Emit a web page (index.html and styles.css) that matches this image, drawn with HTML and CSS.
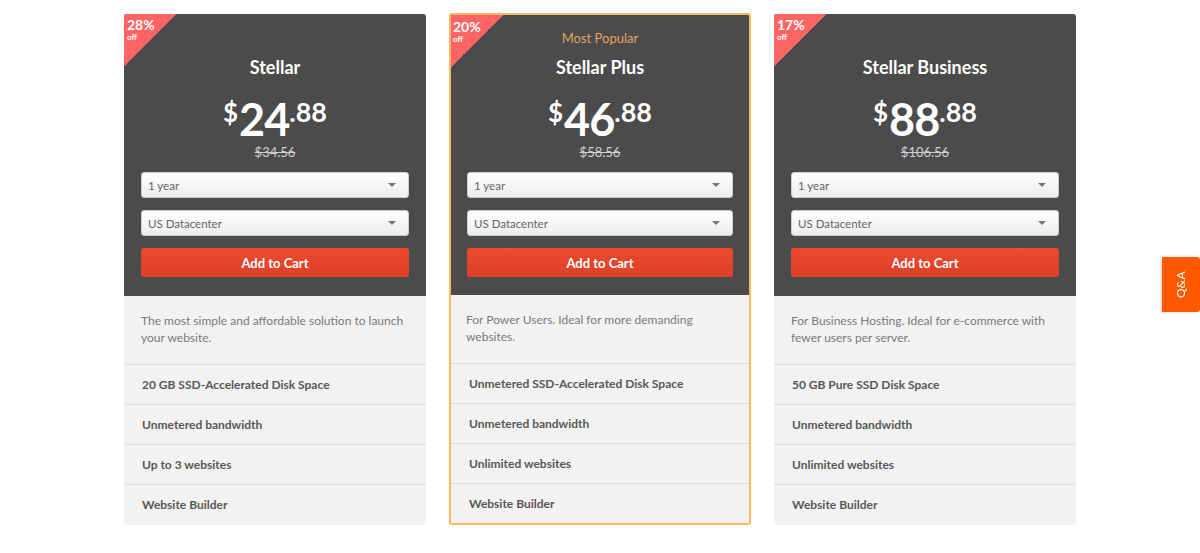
FILE: index.html
```html
<!DOCTYPE html>
<html lang="en">
<head>
    <meta charset="UTF-8">
    <title>Stellar Hosting Plans</title>
    <link rel="stylesheet" href="styles.css">
</head>
<body>
    <div class="plans">
        <div class="plan">
            <div class="plan-head">
                <div class="badge"><span class="badge-pct">28%</span><span class="badge-off">off</span></div>
                <div class="popular"></div>
                <div class="plan-name">Stellar</div>
                <div class="price"><span class="cur">$</span><span class="whole">24</span><span class="cents">.88</span></div>
                <div class="old-price">$34.56</div>
                <div class="select">1 year<span class="arrow"></span></div>
                <div class="select">US Datacenter<span class="arrow"></span></div>
                <button class="cart-btn">Add to Cart</button>
            </div>
            <div class="plan-body">
                <p class="desc">The most simple and affordable solution to launch your website.</p>
                <div class="feature">20 GB SSD-Accelerated Disk Space</div>
                <div class="feature">Unmetered bandwidth</div>
                <div class="feature">Up to 3 websites</div>
                <div class="feature">Website Builder</div>
            </div>
        </div>

        <div class="plan featured">
            <div class="plan-head">
                <div class="badge"><span class="badge-pct">20%</span><span class="badge-off">off</span></div>
                <div class="popular">Most Popular</div>
                <div class="plan-name">Stellar Plus</div>
                <div class="price"><span class="cur">$</span><span class="whole">46</span><span class="cents">.88</span></div>
                <div class="old-price">$58.56</div>
                <div class="select">1 year<span class="arrow"></span></div>
                <div class="select">US Datacenter<span class="arrow"></span></div>
                <button class="cart-btn">Add to Cart</button>
            </div>
            <div class="plan-body">
                <p class="desc">For Power Users. Ideal for more demanding websites.</p>
                <div class="feature">Unmetered SSD-Accelerated Disk Space</div>
                <div class="feature">Unmetered bandwidth</div>
                <div class="feature">Unlimited websites</div>
                <div class="feature">Website Builder</div>
            </div>
        </div>

        <div class="plan">
            <div class="plan-head">
                <div class="badge"><span class="badge-pct">17%</span><span class="badge-off">off</span></div>
                <div class="popular"></div>
                <div class="plan-name">Stellar Business</div>
                <div class="price"><span class="cur">$</span><span class="whole">88</span><span class="cents">.88</span></div>
                <div class="old-price">$106.56</div>
                <div class="select">1 year<span class="arrow"></span></div>
                <div class="select">US Datacenter<span class="arrow"></span></div>
                <button class="cart-btn">Add to Cart</button>
            </div>
            <div class="plan-body">
                <p class="desc">For Business Hosting. Ideal for e-commerce with fewer users per server.</p>
                <div class="feature">50 GB Pure SSD Disk Space</div>
                <div class="feature">Unmetered bandwidth</div>
                <div class="feature">Unlimited websites</div>
                <div class="feature">Website Builder</div>
            </div>
        </div>
    </div>

    <div class="qa-tab">Q&amp;A</div>
</body>
</html>
```

FILE: styles.css
```css
body {
    font-family: Lato, "Open Sans", sans-serif;
    margin: 0;
    background-color: #fff;
}
.plans {
    display: flex;
    justify-content: center;
    gap: 23px;
    padding-top: 14px;
}
.plan {
    width: 302px;
    box-sizing: border-box;
    border-radius: 3px;
    overflow: hidden;
    background-color: #f2f2f2;
}
.plan.featured {
    border: 2px solid #f4b866;
    margin-top: -1px;
    height: 512px;
}
.plan-head {
    position: relative;
    background-color: #4b4b4c;
    padding: 16px 17px 19px;
    text-align: center;
    color: #fff;
}
.featured .plan-head {
    padding: 15px 16px 18px;
}
.badge {
    position: absolute;
    top: 0;
    left: 0;
    width: 52px;
    height: 52px;
    background: linear-gradient(135deg, #fd6464 50%, transparent 50%);
    text-align: left;
    padding: 4px 0 0 3px;
    box-sizing: border-box;
    line-height: 1;
}
.featured .badge {
    padding: 5px 0 0 2px;
}
.badge-pct {
    display: block;
    font-size: 14px;
    font-weight: bold;
}
.badge-off {
    display: block;
    font-size: 8px;
    font-weight: bold;
    margin-top: 1px;
}
.popular {
    height: 16px;
    line-height: 16px;
    font-size: 13px;
    color: #e3a45c;
    margin-bottom: 12px;
}
.plan-name {
    font-size: 18px;
    line-height: 18px;
    font-weight: bold;
}
.price {
    display: flex;
    justify-content: center;
    align-items: flex-start;
    margin-top: 24px;
    height: 38px;
    font-weight: bold;
    line-height: 1;
}
.cur {
    font-size: 26px;
    margin-top: -1px;
    margin-right: 1px;
}
.whole {
    font-size: 45px;
    line-height: 38px;
    letter-spacing: -1px;
}
.cents {
    font-size: 27px;
    margin-top: -2px;
}
.old-price {
    margin-top: 6px;
    font-size: 13px;
    line-height: 16px;
    color: #d0d0d0;
    text-decoration: line-through;
}
.select {
    position: relative;
    margin-top: 12px;
    height: 26px;
    line-height: 26px;
    box-sizing: border-box;
    border: 1px solid #ccc;
    border-radius: 3px;
    background: linear-gradient(#ffffff, #ececec);
    color: #666;
    font-size: 11.5px;
    text-align: left;
    padding-left: 6px;
}
.arrow {
    position: absolute;
    right: 12px;
    top: 10px;
    border-left: 4px solid transparent;
    border-right: 4px solid transparent;
    border-top: 4px solid #777;
}
.cart-btn {
    display: block;
    width: 100%;
    margin-top: 12px;
    height: 29px;
    border: none;
    border-radius: 3px;
    background: linear-gradient(#ea4b2f, #de4028);
    color: #fff;
    font-family: inherit;
    font-size: 13px;
    font-weight: bold;
    cursor: pointer;
}
.plan-body {
    background-color: #f2f2f2;
}
.desc {
    margin: 0;
    padding: 16px 17px 18px;
    font-size: 12px;
    line-height: 17px;
    color: #7a7a7a;
    min-height: 34px;
}
.feature {
    height: 39px;
    line-height: 39px;
    border-top: 1px solid #dedede;
    padding-left: 18px;
    font-size: 12px;
    font-weight: bold;
    color: #585858;
}
.featured .desc {
    padding-left: 15px;
}
.featured .feature {
    padding-left: 18px;
}
.qa-tab {
    position: fixed;
    right: 0;
    top: 257px;
    width: 38px;
    height: 55px;
    background-color: #ff5a00;
    border-radius: 3px 0 0 3px;
    color: #fff;
    font-size: 12px;
    writing-mode: vertical-rl;
    transform: rotate(180deg);
    display: flex;
    align-items: center;
    justify-content: center;
    box-shadow: 1px 0 3px rgba(0,0,0,0.2);
}
```
